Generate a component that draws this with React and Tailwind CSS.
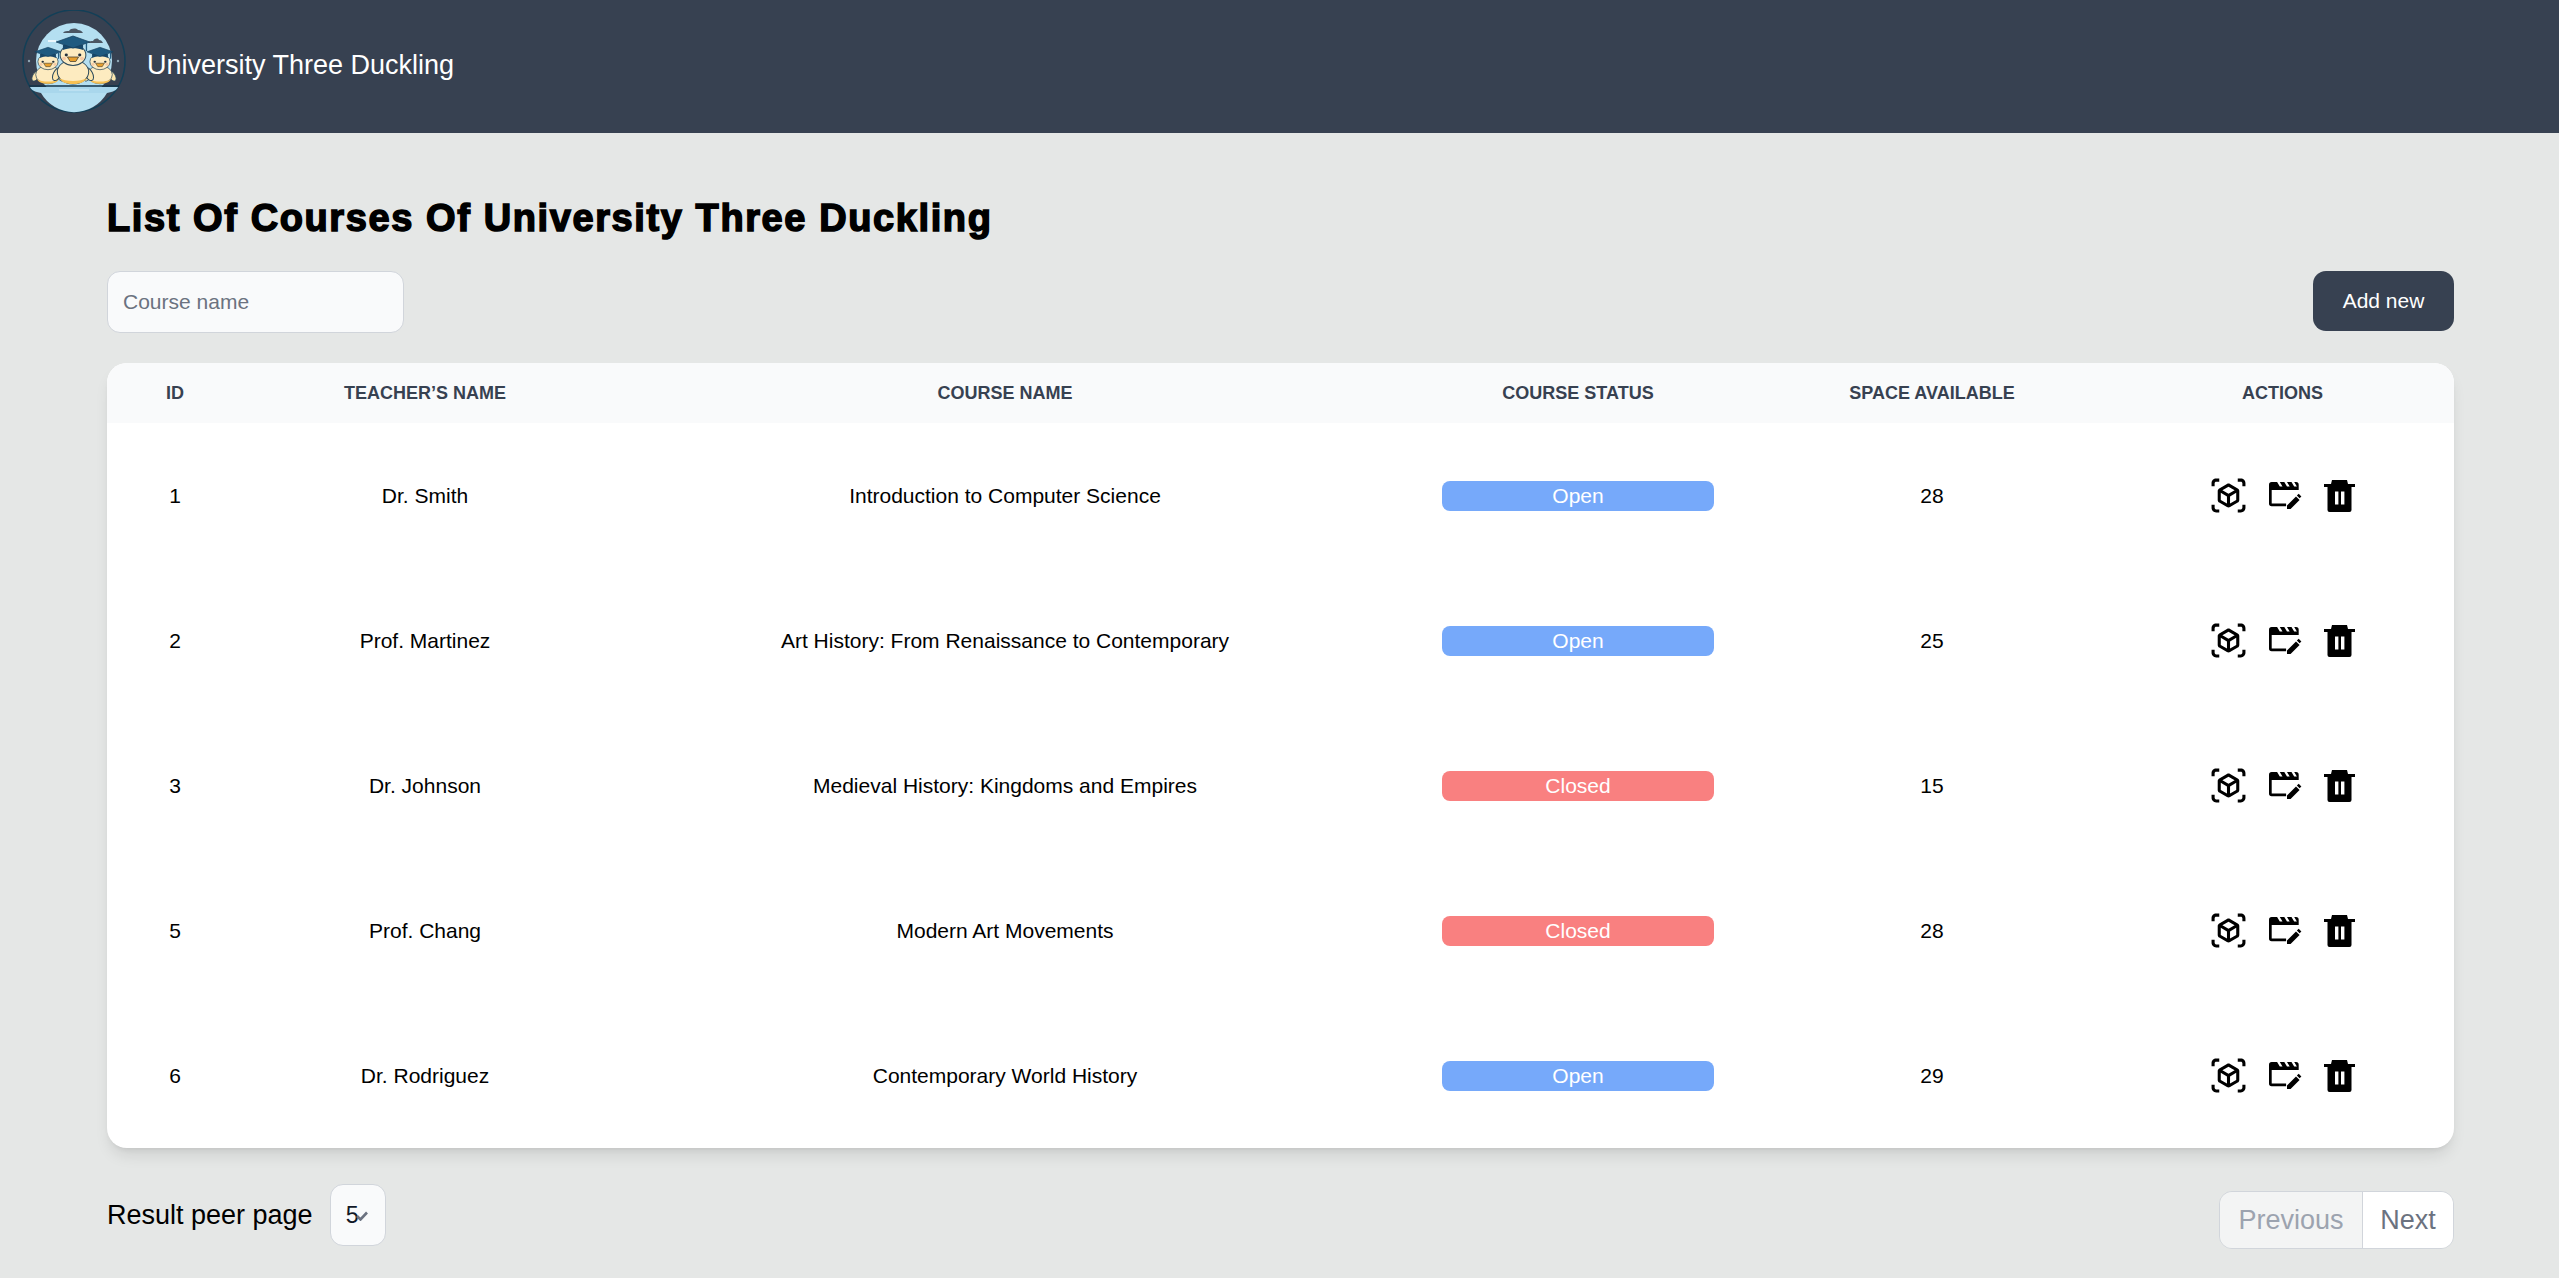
import React from 'react';
import { MdOutlineViewInAr } from 'react-icons/md';

const courses = [
  { id: 1, teacher: 'Dr. Smith', name: 'Introduction to Computer Science', status: 'Open', space: 28 },
  { id: 2, teacher: 'Prof. Martinez', name: 'Art History: From Renaissance to Contemporary', status: 'Open', space: 25 },
  { id: 3, teacher: 'Dr. Johnson', name: 'Medieval History: Kingdoms and Empires', status: 'Closed', space: 15 },
  { id: 5, teacher: 'Prof. Chang', name: 'Modern Art Movements', status: 'Closed', space: 28 },
  { id: 6, teacher: 'Dr. Rodriguez', name: 'Contemporary World History', status: 'Open', space: 29 },
];

// origin is the middle of the feet
const Duck = ({ x, y, sx, sy }) => (
  <g transform={`translate(${x} ${y}) scale(${sx} ${sy})`}>
    <ellipse cx="-14" cy="-9" rx="3.5" ry="7" transform="rotate(25 -14 -9)" fill="#fde6ad" stroke="#2c4a5c" strokeWidth="0.9" />
    <ellipse cx="14" cy="-9" rx="3.5" ry="7" transform="rotate(-25 14 -9)" fill="#fde6ad" stroke="#2c4a5c" strokeWidth="0.9" />
    <ellipse cx="0" cy="-11" rx="14" ry="12" fill="#fdebc0" stroke="#2c4a5c" strokeWidth="0.9" />
    <path d="M-12.5-5C-7-1 7-1 12.5-5 10-.5 6 1 0 1s-10-1.5-12.5-6z" fill="#f8c153" />
    <ellipse cx="0" cy="-28" rx="11.5" ry="10.5" fill="#fdebc0" stroke="#2c4a5c" strokeWidth="0.9" />
    <path d="M-5-26h10l-2.5 4.5h-5z" fill="#e8a02e" stroke="#3c3a30" strokeWidth="0.7" />
    <circle cx="-6" cy="-28" r="1.4" fill="#22303c" />
    <circle cx="6" cy="-28" r="1.4" fill="#22303c" />
    <circle cx="-8" cy="-24.5" r="1.8" fill="#f6c9a4" />
    <circle cx="8" cy="-24.5" r="1.8" fill="#f6c9a4" />
    <path d="M-9-38c4-2 14-2 18 0v5c-5-2.5-13-2.5-18 0z" fill="#17476a" />
    <path d="M-15-41 0-47l15 6-15 6z" fill="#1f5a80" stroke="#173f5c" strokeWidth="0.7" />
    <path d="M12-40v8" stroke="#1f5a80" strokeWidth="1.2" />
  </g>
);

const Logo = () => (
  <svg viewBox="0 0 104 104" className="w-[104px] h-[104px] shrink-0">
    <circle cx="52" cy="51" r="51" fill="none" stroke="#123f57" strokeWidth="1.5" />
    <circle cx="52" cy="51" r="38" fill="#b4dff1" />
    <path d="M41 23c1-2 4-2 6-2 2-3 7-3 9-1 2 0 4 1 5 3z" fill="#4b5663" />
    <path d="M66 33c1-2 3-2 5-2 2-3 5-3 6-1 2 0 3 1 4 3z" fill="#4b5663" />
    <path d="M26 31h8" stroke="#fff" strokeWidth="1.5" />
    <Duck x={26} y={73} sx={0.88} sy={0.76} />
    <Duck x={78} y={73} sx={0.88} sy={0.76} />
    <Duck x={51} y={73} sx={1.12} sy={1} />
    <circle cx="7" cy="51" r="1.2" fill="#8fa6b4" />
    <circle cx="96" cy="51" r="1.2" fill="#8fa6b4" />
    <path d="M7 76h90" stroke="#12354a" strokeWidth="1.6" />
    <path d="M8 77h88c-1 3-5 5-11 6H19c-6-1-10-3-11-6z" fill="#a9d7ec" />
    <path d="M37 80h30" stroke="#cfeaf6" strokeWidth="1" />
    <path d="M19 83h66a38 38 0 0 1-66 0z" fill="#b4dff1" />
  </svg>
);

const MovieEdit = () => (
  <svg viewBox="0 0 36 30" className="w-[32.4px] h-[27px]" fill="currentColor">
    <path fillRule="evenodd" d="M0 3a3 3 0 0 1 3-3h27a3 3 0 0 1 3 3v6H0zM9 0l3 5h3l-3-5zM17 0l3 5h3l-3-5zM25 0l3 5h3l-3-5z" />
    <path d="M0 9h3v15h16v3H3a3 3 0 0 1-3-3z" />
    <path d="M20 30v-4l10-10 4 4-10 10z" />
    <path d="M31 15l2-2 3 3-2 2z" />
  </svg>
);

const TrashIcon = () => (
  <svg viewBox="0 0 31 32" className="w-[31px] h-8" fill="currentColor">
    <path d="M8 0h15l1 4h7v3H0V4h7z" />
    <path fillRule="evenodd" d="M3.5 7h24v23a2 2 0 0 1-2 2h-20a2 2 0 0 1-2-2zM11 11.5v13h3.4v-13zM17 11.5v13h3.4v-13z" />
  </svg>
);

export default function App() {
  return (
    <div className="min-h-screen bg-[#e5e7e6] font-['Liberation_Sans',Arial,sans-serif] text-black">
      <header className="h-[133px] bg-[#374151] flex items-start pl-[22px] pt-[10px] gap-[21px]">
        <Logo />
        <span className="mt-[37px] text-[27px] leading-[36px] text-white">University Three Duckling</span>
      </header>

      <main className="pl-[107px] pr-[105px] pt-[65px]">
        <h1 className="text-[38px] leading-[40px] font-bold tracking-[1.6px] [-webkit-text-stroke:1.5px_black]">
          List Of Courses Of University Three Duckling
        </h1>

        <div className="flex justify-between items-start mt-[33px]">
          <input
            placeholder="Course name"
            className="w-[297px] h-[62px] px-[15px] rounded-[13px] border border-[#d1d5db] bg-[#f9fafb] text-[21px] placeholder:text-[#6b7280] outline-none"
          />
          <button className="w-[141px] h-[60px] rounded-[13px] bg-[#374151] text-white text-[21px]">Add new</button>
        </div>

        <div className="mt-[30px] rounded-[20px] overflow-hidden bg-white shadow-lg">
          <table className="w-full table-fixed text-center text-[21px]">
            <colgroup>
              <col className="w-[136px]" />
              <col className="w-[364px]" />
              <col className="w-[796px]" />
              <col className="w-[350px]" />
              <col className="w-[358px]" />
              <col />
            </colgroup>
            <thead className="bg-[#f9fafb] text-[#374151] text-[18px] uppercase">
              <tr className="h-[60px]">
                <th>ID</th>
                <th>Teacher’s name</th>
                <th>Course name</th>
                <th>Course status</th>
                <th>Space available</th>
                <th>Actions</th>
              </tr>
            </thead>
            <tbody>
              {courses.map((c) => (
                <tr key={c.id} className="h-[145px]">
                  <td>{c.id}</td>
                  <td>{c.teacher}</td>
                  <td>{c.name}</td>
                  <td>
                    <div className={c.status === 'Open' ? 'mx-auto w-[272px] h-[30px] leading-[30px] rounded-lg text-white bg-[#76a9fa]' : 'mx-auto w-[272px] h-[30px] leading-[30px] rounded-lg text-white bg-[#f98080]'}>
                      {c.status}
                    </div>
                  </td>
                  <td>{c.space}</td>
                  <td>
                    <div className="flex justify-center items-center gap-[22px]">
                      <MdOutlineViewInAr className="w-[37px] h-[37px]" />
                      <MovieEdit />
                      <TrashIcon />
                    </div>
                  </td>
                </tr>
              ))}
            </tbody>
          </table>
        </div>

        <div className="flex justify-between items-start mt-9">
          <div className="flex items-center gap-[17px]">
            <span className="text-[27px]">Result peer page</span>
            <div className="relative w-[56px] h-[62px] rounded-[13px] border border-[#d1d5db] bg-[#f9fafb] flex items-center pl-[15px] text-[23.3px] text-[#111827]">
              5
              <svg viewBox="0 0 12 10" className="absolute left-[25px] top-[26px] w-[12px] h-[10px]" fill="none" stroke="#6b7280" strokeWidth="2.6">
                <path d="M1 5l3.5 3.5L11 1.5" />
              </svg>
            </div>
          </div>
          <div className="flex mt-[7px] h-[58px] text-[27px] rounded-[13px] border border-[#d1d5db] overflow-hidden">
            <span className="w-[143px] bg-[#f3f4f4] text-[#9ca3af] flex items-center justify-center border-r border-[#d1d5db]">Previous</span>
            <span className="w-[90px] bg-white text-[#6b7280] flex items-center justify-center">Next</span>
          </div>
        </div>
      </main>
    </div>
  );
}
